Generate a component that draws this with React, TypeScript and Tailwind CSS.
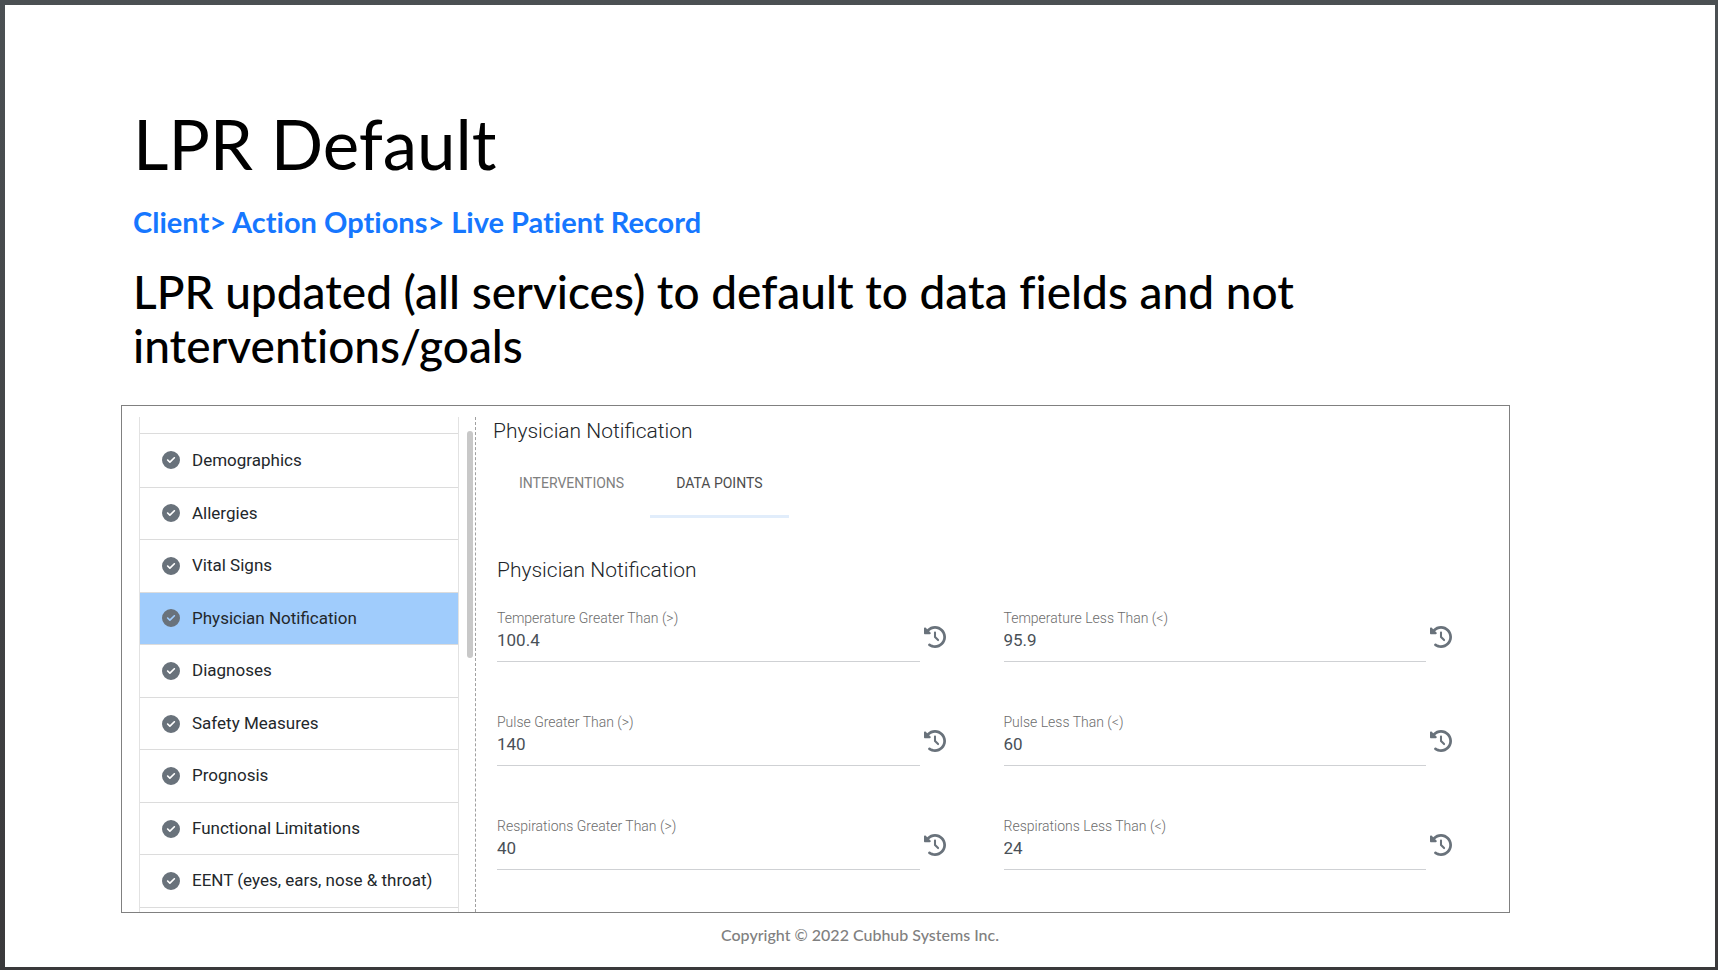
import { useState } from 'react'
import { FaCircleCheck, FaClockRotateLeft } from 'react-icons/fa6'

const SECTIONS = [
  'Demographics',
  'Allergies',
  'Vital Signs',
  'Physician Notification',
  'Diagnoses',
  'Safety Measures',
  'Prognosis',
  'Functional Limitations',
  'EENT (eyes, ears, nose & throat)',
]

const FIELDS = [
  { id: 'temp-gt',  label: 'Temperature Greater Than (>)',  value: '100.4' },
  { id: 'temp-lt',  label: 'Temperature Less Than (<)',     value: '95.9' },
  { id: 'pulse-gt', label: 'Pulse Greater Than (>)',        value: '140' },
  { id: 'pulse-lt', label: 'Pulse Less Than (<)',           value: '60' },
  { id: 'resp-gt',  label: 'Respirations Greater Than (>)', value: '40' },
  { id: 'resp-lt',  label: 'Respirations Less Than (<)',    value: '24' },
]

function Sidebar() {
  const [active, setActive] = useState('Physician Notification')

  return (
    <nav className="flex w-[320px] shrink-0 flex-col border-x border-[#e2e2e2]">
      <div className="h-4 shrink-0" />
      <ul className="grid flex-1 auto-rows-fr border-y border-[#dcdcdc]">
        {SECTIONS.map((name, i) => (
          <li key={name} className={i > 0 ? 'border-t border-[#dcdcdc]' : ''}>
            <button
              onClick={() => setActive(name)}
              className={`flex h-full w-full items-center gap-3 pl-[22px] text-left text-[17px] text-[#23272b] ${active === name ? 'bg-[#a0ccfc]' : ''}`}
            >
              <FaCircleCheck className="size-[18px] text-[#69727b]" />
              {name}
            </button>
          </li>
        ))}
      </ul>
      <div className="h-1 shrink-0" />
    </nav>
  )
}

function Field({ id, label, value }: { id: string; label: string; value: string }) {
  const [text, setText] = useState(value)

  return (
    <div className="flex items-start gap-1">
      <div className="flex min-w-0 flex-1 flex-col border-b border-[#cfd1d4] pb-2">
        <label htmlFor={id} className="text-sm leading-5 font-light text-[#6c6c6c]">{label}</label>
        <input
          id={id}
          value={text}
          onChange={e => setText(e.target.value)}
          className="h-[25px] w-full bg-transparent text-[17px] text-[#495057] outline-none"
        />
      </div>
      <button aria-label={`History of ${label}`} className="pt-[18px] text-[#69727b]">
        <FaClockRotateLeft className="size-[22px]" />
      </button>
    </div>
  )
}

export default function App() {
  const [tab, setTab] = useState('DATA POINTS')

  return (
    <div className="min-h-screen bg-linear-to-b from-[#4b5053] to-[#3a393b] pt-[5px] pr-[3px] pb-[3px] pl-[5px] font-[Lato,sans-serif] [font-variant-ligatures:none]">
      <main className="flex min-h-[962px] flex-col bg-white pr-[205px] pl-[116px]">
        <h1 className="pt-24 pl-3 text-[69px] leading-[86px] text-black">LPR Default</h1>
        <h2 className="pt-[15px] pl-3 text-[29px] leading-10 font-bold text-[#1677ff]">
          Client&gt; Action Options&gt; Live Patient Record
        </h2>
        <p className="pt-[23px] pl-3 text-[46px] leading-[54px] font-medium text-black">
          LPR updated (all services) to default to data fields and not interventions/goals
        </p>

        <section className="mt-8 flex border border-[#808080] pt-[11px] pl-[17px] font-[Roboto,sans-serif] [font-variant-ligatures:normal]">
          <Sidebar />
          <div className="flex w-[17px] shrink-0 justify-end border-r border-dashed border-[#a0a0a0] pr-0.5">
            <div className="mt-[14px] h-[227px] w-1.5 rounded-full bg-[#c8c8c8]" />
          </div>

          <div className="flex-1 pr-[57px] pb-[42px] pl-[17px]">
            <h3 className="text-[21px] leading-7 font-light text-[#212529]">Physician Notification</h3>
            <div className="mt-[11px] flex">
              {['INTERVENTIONS', 'DATA POINTS'].map(name => (
                <button
                  key={name}
                  onClick={() => setTab(name)}
                  className={`h-[62px] border-b-[3px] px-[26px] pb-1.5 text-sm ${tab === name ? 'border-[#e1edfb] text-[#4d4d4d]' : 'border-transparent text-[#808080]'}`}
                >
                  {name}
                </button>
              ))}
            </div>
            <div className="pt-[38px] pl-1">
              <h4 className="text-[21px] leading-7 font-light text-[#212529]">Physician Notification</h4>
              <div className="mt-6 grid grid-cols-2 gap-x-[58px] gap-y-[50px]">
                {FIELDS.map(f => <Field key={f.id} {...f} />)}
              </div>
            </div>
          </div>
        </section>
      </main>
      <footer className="-mt-11 text-center text-base leading-6 font-medium text-[#808080]">
        Copyright © 2022 Cubhub Systems Inc.
      </footer>
    </div>
  )
}
